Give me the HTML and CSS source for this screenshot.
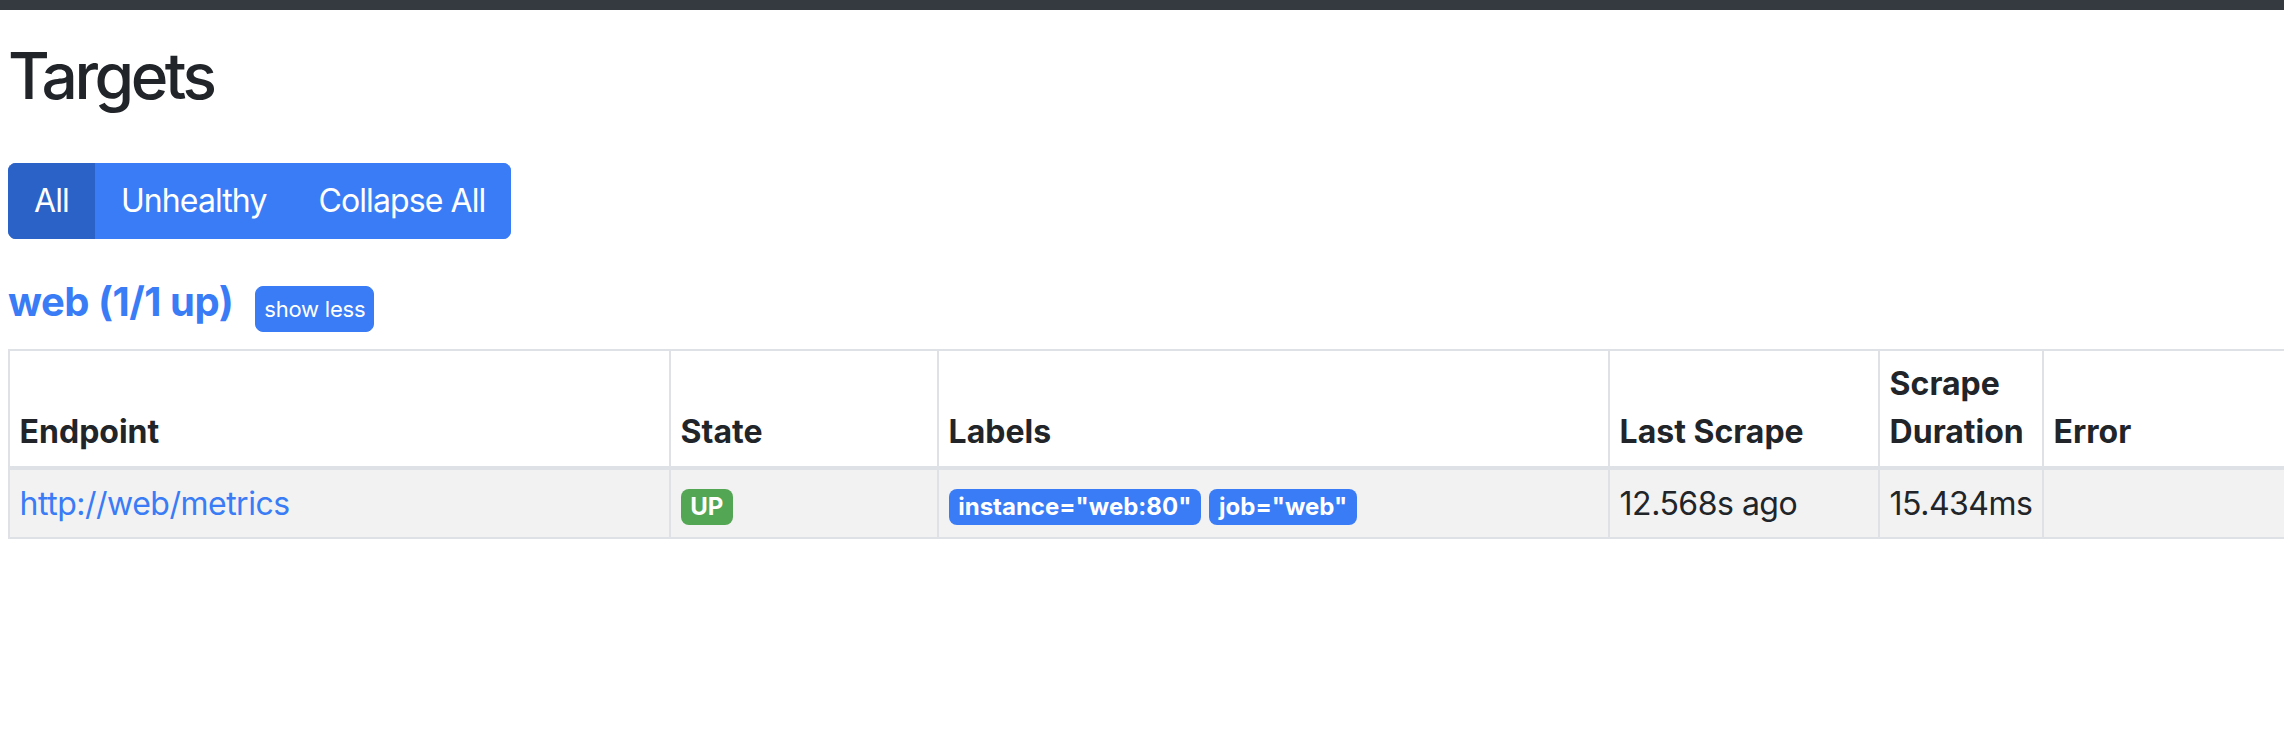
FILE: index.html
```html
<!DOCTYPE html>
<html lang="en">
<head>
<meta charset="utf-8">
<title>Targets</title>
<link rel="stylesheet" href="styles.css">
</head>
<body>
<div class="topbar"></div>
<main class="page">
  <h2 class="title">Targets</h2>
  <div class="btn-group">
    <button class="btn active">All</button>
    <button class="btn">Unhealthy</button>
    <button class="btn">Collapse All</button>
  </div>
  <div class="pool-head">
    <a class="pool-name" href="#web">web (1/1 up)</a>
    <button class="btn-sm">show less</button>
  </div>
  <table class="targets">
    <colgroup>
      <col class="c-endpoint">
      <col class="c-state">
      <col class="c-labels">
      <col class="c-last">
      <col class="c-dur">
      <col class="c-error">
    </colgroup>
    <thead>
      <tr>
        <th>Endpoint</th>
        <th>State</th>
        <th>Labels</th>
        <th>Last Scrape</th>
        <th>Scrape Duration</th>
        <th>Error</th>
      </tr>
    </thead>
    <tbody>
      <tr>
        <td><a class="endpoint" href="#metrics">http://web/metrics</a></td>
        <td><span class="badge badge-up">UP</span></td>
        <td><span class="badge badge-label">instance="web:80"</span> <span class="badge badge-label">job="web"</span></td>
        <td>12.568s ago</td>
        <td>15.434ms</td>
        <td></td>
      </tr>
    </tbody>
  </table>
</main>
</body>
</html>
```

FILE: styles.css
```css
html, body {
  margin: 0;
  padding: 0;
  background: #ffffff;
  overflow: hidden;
}

body {
  font-family: Inter, "Liberation Sans", sans-serif;
  font-size: 32px;
  line-height: 1.5;
  color: #212529;
  letter-spacing: -0.5px;
}

.topbar {
  height: 10px;
  background: #343a40;
}

.page {
  padding: 28px 0 0 8px;
}

.title {
  margin: 0 0 48px 0;
  font-size: 64px;
  font-weight: 500;
  line-height: 1.2;
  letter-spacing: -3.5px;
  color: #212529;
}

.btn-group {
  display: inline-flex;
  border-radius: 8px;
  overflow: hidden;
}

.btn {
  font-family: inherit;
  font-size: 32px;
  line-height: 48px;
  letter-spacing: -0.9px;
  padding: 12px 24px;
  border: 2px solid #3a7cf6;
  background: #3a7cf6;
  color: #ffffff;
  margin: 0;
  cursor: pointer;
}

.btn.active {
  background: #2b62c8;
  border-color: #2b62c8;
}

.pool-head {
  display: flex;
  align-items: flex-start;
  gap: 22px;
  margin-top: 39px;
}

.pool-name {
  font-size: 40px;
  font-weight: 700;
  line-height: 48px;
  letter-spacing: -0.5px;
  color: #3a7cf6;
  text-decoration: none;
}

.btn-sm {
  margin-top: 8px;
  font-family: inherit;
  font-size: 22px;
  line-height: 36px;
  letter-spacing: -0.2px;
  padding: 4px 8px;
  border: 1px solid #3a7cf6;
  border-radius: 8px;
  background: #3a7cf6;
  color: #ffffff;
}

.targets {
  margin-top: 17px;
  border-collapse: collapse;
  table-layout: fixed;
  width: 2600px;
}

.c-endpoint { width: 661px; }
.c-state { width: 268px; }
.c-labels { width: 671px; }
.c-last { width: 270px; }
.c-dur { width: 164px; }
.c-error { width: 566px; }

.targets th,
.targets td {
  border: 2px solid #dee2e6;
  padding: 9.6px;
  text-align: left;
}

.targets th {
  vertical-align: bottom;
  font-weight: 700;
  letter-spacing: 0;
  border-bottom-width: 4px;
}

.targets td {
  vertical-align: top;
}

.targets tbody tr {
  background: #f2f2f2;
}

.endpoint {
  color: #3a7cf6;
  text-decoration: none;
}

.badge {
  display: inline-block;
  font-size: 24px;
  font-weight: 700;
  line-height: 1;
  letter-spacing: 0;
  padding: 6px 9.6px;
  border-radius: 8px;
  color: #ffffff;
  vertical-align: baseline;
  white-space: nowrap;
}

.badge-up {
  background: #53a653;
}

.badge-label {
  background: #3a7cf6;
}
```
